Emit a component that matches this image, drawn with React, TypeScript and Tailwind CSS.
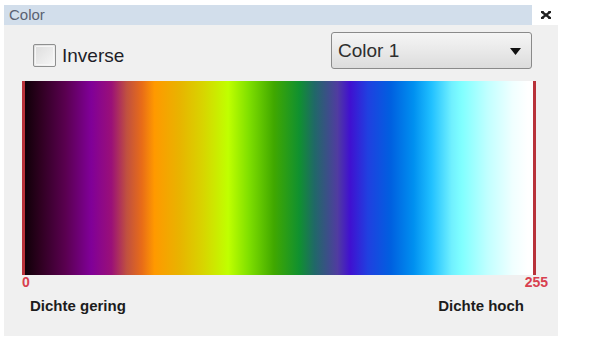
import React from "react";

export default function App() {
  return (
    <div className="w-[600px] h-[340px] bg-white overflow-hidden font-['Liberation_Sans',Arial,sans-serif]">
      <div className="ml-[4px] mt-[5px] w-[554px] flex flex-col">
        {/* title row */}
        <div className="flex h-[20px]">
          <div className="w-[528px] h-[20px] bg-[#d2deeb] flex items-center pl-[5px] text-[15px] leading-[20px] text-[#5a6272]">
            Color
          </div>
          <div className="flex-1 flex items-start pt-[6px] pl-[9px]">
            <svg width="10" height="8" viewBox="0 0 10 8">
              <path d="M1 1 L9 7 M9 1 L1 7" stroke="#222" strokeWidth="2.2" strokeLinecap="square" />
              <path d="M0 1 H3 M7 1 H10 M0 7 H3 M7 7 H10" stroke="#222" strokeWidth="1.4" />
            </svg>
          </div>
        </div>
        {/* panel body */}
        <div className="h-[311px] bg-[#f0f0f0] flex flex-col pt-[7px]">
          <div className="flex justify-between items-start pl-[29px] pr-[26px]">
            <div className="flex items-center gap-[6px] mt-[12px]">
              <div className="w-[23px] h-[23px] border border-[#8e8f8f] rounded-[2px] bg-[linear-gradient(135deg,#dcdcdc,#f7f7f7)] p-[1px]">
                <div className="w-full h-full border border-[#f6f6f6] rounded-[1px]" />
              </div>
              <span className="text-[19px] leading-[23px] text-[#1e1e28]">Inverse</span>
            </div>
            <div className="w-[201px] h-[37px] border border-[#8a8a8a] rounded-[3px] bg-[linear-gradient(to_bottom,#f5f5f5,#e9e9e9_50%,#dcdcdc)] flex items-center justify-between pl-[6px] pr-[10px]">
              <span className="text-[19px] leading-[22px] text-[#2e2e2e]">Color 1</span>
              <svg width="11" height="7" viewBox="0 0 11 7" className="mt-[1px]">
                <path d="M0 0 H11 L5.5 7 Z" fill="#111" />
              </svg>
            </div>
          </div>
          {/* gradient */}
          <div className="ml-[18px] mt-[12px] w-[514px] h-[194px] border-l-[3px] border-r-[3px] border-[#b8323a] bg-[linear-gradient(to_right,#100008_0%,#2e0020_3%,#5a0050_8%,#800098_13%,#9a1078_17%,#c05040_20%,#e86c18_23%,#ff9900_25.5%,#e8b400_30.5%,#d8d400_35%,#c0ff00_40%,#80e000_44%,#40a800_49%,#109030_54%,#206868_57%,#503ca0_61.5%,#4010d0_64%,#2040e0_67.5%,#0060e0_72%,#0090f0_76.5%,#20c0ff_80%,#70f0ff_84%,#80ffff_86%,#c0ffff_91%,#f0ffff_96%,#ffffff_99%)]" />
          {/* scale labels */}
          <div className="ml-[18px] w-[526px] flex justify-between text-[14px] leading-[14px] font-bold text-[#d8404f]">
            <span>0</span>
            <span>255</span>
          </div>
          <div className="ml-[26px] w-[494px] mt-[8px] flex justify-between text-[15px] leading-[17px] font-bold text-[#1c1c1c]">
            <span>Dichte gering</span>
            <span>Dichte hoch</span>
          </div>
        </div>
      </div>
    </div>
  );
}
